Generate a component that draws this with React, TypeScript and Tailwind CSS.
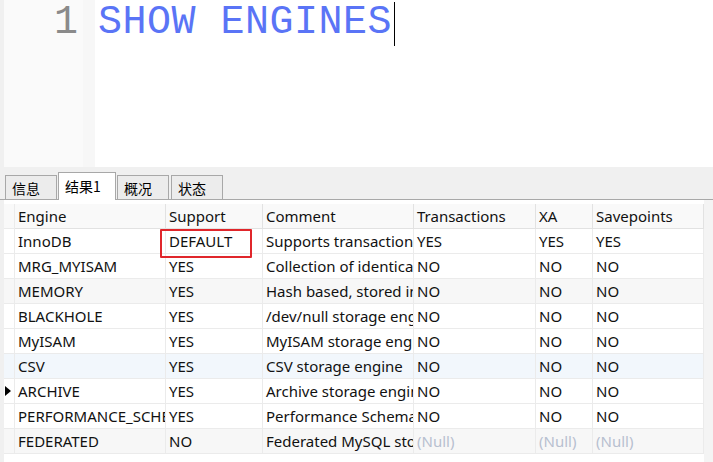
import React from "react";

type Row = {
  engine: string;
  support: string;
  comment: string;
  tx: string;
  xa: string;
  sp: string;
  bg?: string;
};

const rows: Row[] = [
  { engine: "InnoDB", support: "DEFAULT", comment: "Supports transactions, row-level locking", tx: "YES", xa: "YES", sp: "YES" },
  { engine: "MRG_MYISAM", support: "YES", comment: "Collection of identical MyISAM tables", tx: "NO", xa: "NO", sp: "NO" },
  { engine: "MEMORY", support: "YES", comment: "Hash based, stored in memory", tx: "NO", xa: "NO", sp: "NO", bg: "bg-[#f7f7f7]" },
  { engine: "BLACKHOLE", support: "YES", comment: "/dev/null storage engine", tx: "NO", xa: "NO", sp: "NO" },
  { engine: "MyISAM", support: "YES", comment: "MyISAM storage engine", tx: "NO", xa: "NO", sp: "NO" },
  { engine: "CSV", support: "YES", comment: "CSV storage engine", tx: "NO", xa: "NO", sp: "NO", bg: "bg-[#f2f7fc]" },
  { engine: "ARCHIVE", support: "YES", comment: "Archive storage engine", tx: "NO", xa: "NO", sp: "NO" },
  { engine: "PERFORMANCE_SCHEMA", support: "YES", comment: "Performance Schema", tx: "NO", xa: "NO", sp: "NO" },
  { engine: "FEDERATED", support: "NO", comment: "Federated MySQL storage engine", tx: "(Null)", xa: "(Null)", sp: "(Null)", bg: "bg-[#f7f7f7]" },
];

const cols = "grid grid-cols-[11px_151px_97px_151px_122px_57px_111px]";

const Cell = ({ v }: { v: string }) => (
  <div
    className={`h-[25px] border-r border-b border-[#ebebeb] pl-[3px] overflow-hidden whitespace-nowrap leading-[25px] ${
      v === "(Null)" ? "text-[#b8c0d0]" : "text-[#111]"
    }`}
  >
    {v}
  </div>
);

const tabs = ["信息", "结果1", "概况", "状态"];

export default function App() {
  return (
    <div className="w-[713px] h-[462px] flex flex-col bg-[#f0f0f0] overflow-hidden">
      {/* editor */}
      <div className="h-[167px] flex">
        <div className="w-[4px] bg-[#f0f0f0]" />
        <div className="w-[79px] bg-[#fafafa] flex justify-end pr-[5px] pt-[1px] font-['Liberation_Mono',monospace] text-[40px] leading-[44px] text-[#8a8a8a]">
          1
        </div>
        <div className="w-[12px] bg-[#f7f7f7]" />
        <div className="flex-1 bg-white pl-[3px] pt-[1px] flex items-start">
          <span className="font-['Liberation_Mono',monospace] text-[40px] leading-[44px] text-[#5a74f6] tracking-[0.5px]">
            SHOW ENGINES
          </span>
          <span className="w-[1px] h-[44px] bg-black mt-[1px] ml-[2px]" />
        </div>
      </div>

      {/* tab bar */}
      <div className="h-[33px] pt-[5px] pl-[4px] flex items-end border-b border-[#a8a8a8] font-['Noto_Sans_CJK_SC',sans-serif] text-[14px]">
        {tabs.map((t, i) =>
          i === 1 ? (
            <div
              key={t}
              className="h-[28px] w-[58px] bg-white border border-b-0 border-[#a8a8a8] -mb-[1px] pl-[6px] leading-[26px] text-black"
            >
              {t}
            </div>
          ) : (
            <div
              key={t}
              className="h-[24px] w-[52px] bg-[#ececec] border border-b-0 border-[#a8a8a8] pl-[6px] leading-[24px] text-black mx-[1px]"
            >
              {t}
            </div>
          )
        )}
      </div>

      {/* result grid */}
      <div className="flex-1 flex">
        <div className="w-[4px] bg-[#f0f0f0]" />
        <div className="flex-1 bg-white pt-[4px] relative font-['Noto_Sans',sans-serif] text-[15px]">
          <div className={`${cols} bg-[#f9f9f9]`}>
            <div className="h-[25px] border-r border-b border-[#ebebeb]" />
            {["Engine", "Support", "Comment", "Transactions", "XA", "Savepoints"].map((h) => (
              <div
                key={h}
                className="h-[25px] border-r border-b border-[#e2e2e2] pl-[3px] leading-[25px] text-[#111] whitespace-nowrap"
              >
                {h}
              </div>
            ))}
          </div>
          {rows.map((r) => (
            <div key={r.engine} className={`${cols} ${r.bg ?? "bg-white"}`}>
              <div className="h-[25px] border-r border-b border-[#ebebeb] flex items-center">
                {r.engine === "ARCHIVE" && (
                  <svg width="6" height="10" viewBox="0 0 6 10" className="ml-[1px]">
                    <path d="M0 0 L6 5 L0 10 Z" fill="#000" />
                  </svg>
                )}
              </div>
              <Cell v={r.engine} />
              <Cell v={r.support} />
              <Cell v={r.comment} />
              <Cell v={r.tx} />
              <Cell v={r.xa} />
              <Cell v={r.sp} />
            </div>
          ))}
          {/* highlight on DEFAULT */}
          <div className="absolute left-[156px] top-[29px] w-[92px] h-[29px] border-2 border-[#e0262b] rounded-[1px]" />
        </div>
        <div className="w-[9px] bg-[#f4f4f4]" />
      </div>
    </div>
  );
}
